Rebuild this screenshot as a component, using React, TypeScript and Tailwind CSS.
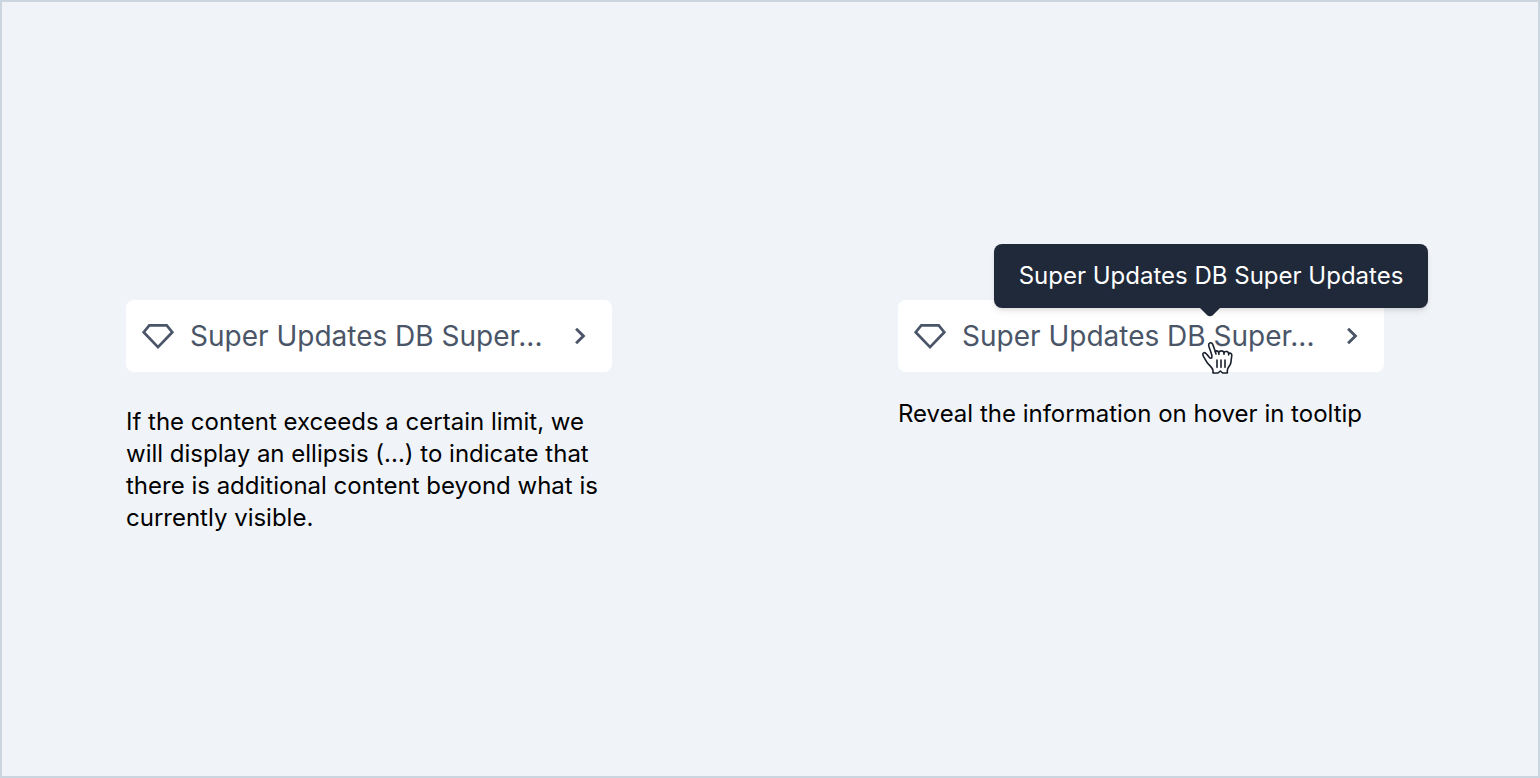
import type { ReactNode } from "react";

function DiamondIcon() {
  return (
    <svg className="size-8 shrink-0" viewBox="0 0 32 32" fill="none" stroke="currentColor" strokeWidth="2.7" aria-hidden="true">
      <path d="M7.3 5.3H24.7L30.3 12.2L16 27.1L1.7 12.2Z" />
    </svg>
  );
}

function ChevronIcon() {
  return (
    <svg className="size-8 shrink-0" viewBox="0 0 32 32" fill="none" stroke="currentColor" strokeWidth="2.9" aria-hidden="true">
      <path d="M12.1 8.8L19.4 16L12.1 23.2" />
    </svg>
  );
}

function HandCursor() {
  return (
    <svg
      className="pointer-events-none absolute top-10 left-[302px] h-9 w-[34px]"
      viewBox="0 0 102 108"
      fill="white"
      stroke="#1a202c"
      strokeWidth="4.8"
      strokeLinejoin="round"
      strokeLinecap="round"
      aria-hidden="true"
    >
      <path d="M27 51C22 44 17 37 12 38C7 39 8 45 11 50C16 57 18 66 26 73C32 79 38 84 39 91V99H54L61 93L68 99H82V91C82 84 88 79 91 73C94 67 93 59 95 50C97 42 93 38 86 40C85 35 77 32 72 37C69 31 59 31 56 37C54 32 49 31 46 35C43 26 40 17 37 11C33 6 25 9 26 16C28 26 35 39 36 49C36 56 32 57 27 51Z" />
      <path d="M46 35L48 42M56 37L57 43M72 37V43M86 40V45M51 60V82M63 60V82M75 60V82" fill="none" />
    </svg>
  );
}

function Tooltip({ children }: { children: ReactNode }) {
  return (
    <div
      role="tooltip"
      id="item-tooltip"
      className="absolute -top-14 left-24 flex h-16 w-[434px] items-center justify-center rounded-lg bg-[#1f293a] text-2xl whitespace-nowrap text-white shadow-md"
    >
      {children}
      <svg className="absolute top-full left-[206px] h-[9px] w-5" viewBox="0 0 20 9" fill="#1f293a" aria-hidden="true">
        <path d="M0 0H20L12.5 7.5Q10 9 7.5 7.5Z" />
      </svg>
    </div>
  );
}

function ItemRow({ describedBy }: { describedBy?: string }) {
  return (
    <button
      type="button"
      aria-describedby={describedBy}
      className="flex h-[72px] w-full items-center gap-4 rounded-lg bg-white px-4 text-left text-[28px] text-[#4a5568]"
    >
      <DiamondIcon />
      <span className="min-w-0 flex-1 truncate">Super Updates DB Super...</span>
      <ChevronIcon />
    </button>
  );
}

export default function App() {
  return (
    <main className="flex min-h-screen items-start justify-between gap-8 border-2 border-[#cbd5e0] bg-[#f0f4f9] pt-[298px] pr-[154px] pl-[124px] font-['Inter',sans-serif] text-black">
      <section className="flex w-[486px] flex-col gap-[34px]">
        <ItemRow />
        <p className="text-2xl">
          If the content exceeds a certain limit, we will display an ellipsis (...) to indicate that there is additional
          content beyond what is currently visible.
        </p>
      </section>
      <section className="flex w-[486px] flex-col gap-[26px]">
        <div className="relative">
          <ItemRow describedBy="item-tooltip" />
          <Tooltip>Super Updates DB Super Updates</Tooltip>
          <HandCursor />
        </div>
        <p className="text-2xl">Reveal the information on hover in tooltip</p>
      </section>
    </main>
  );
}
